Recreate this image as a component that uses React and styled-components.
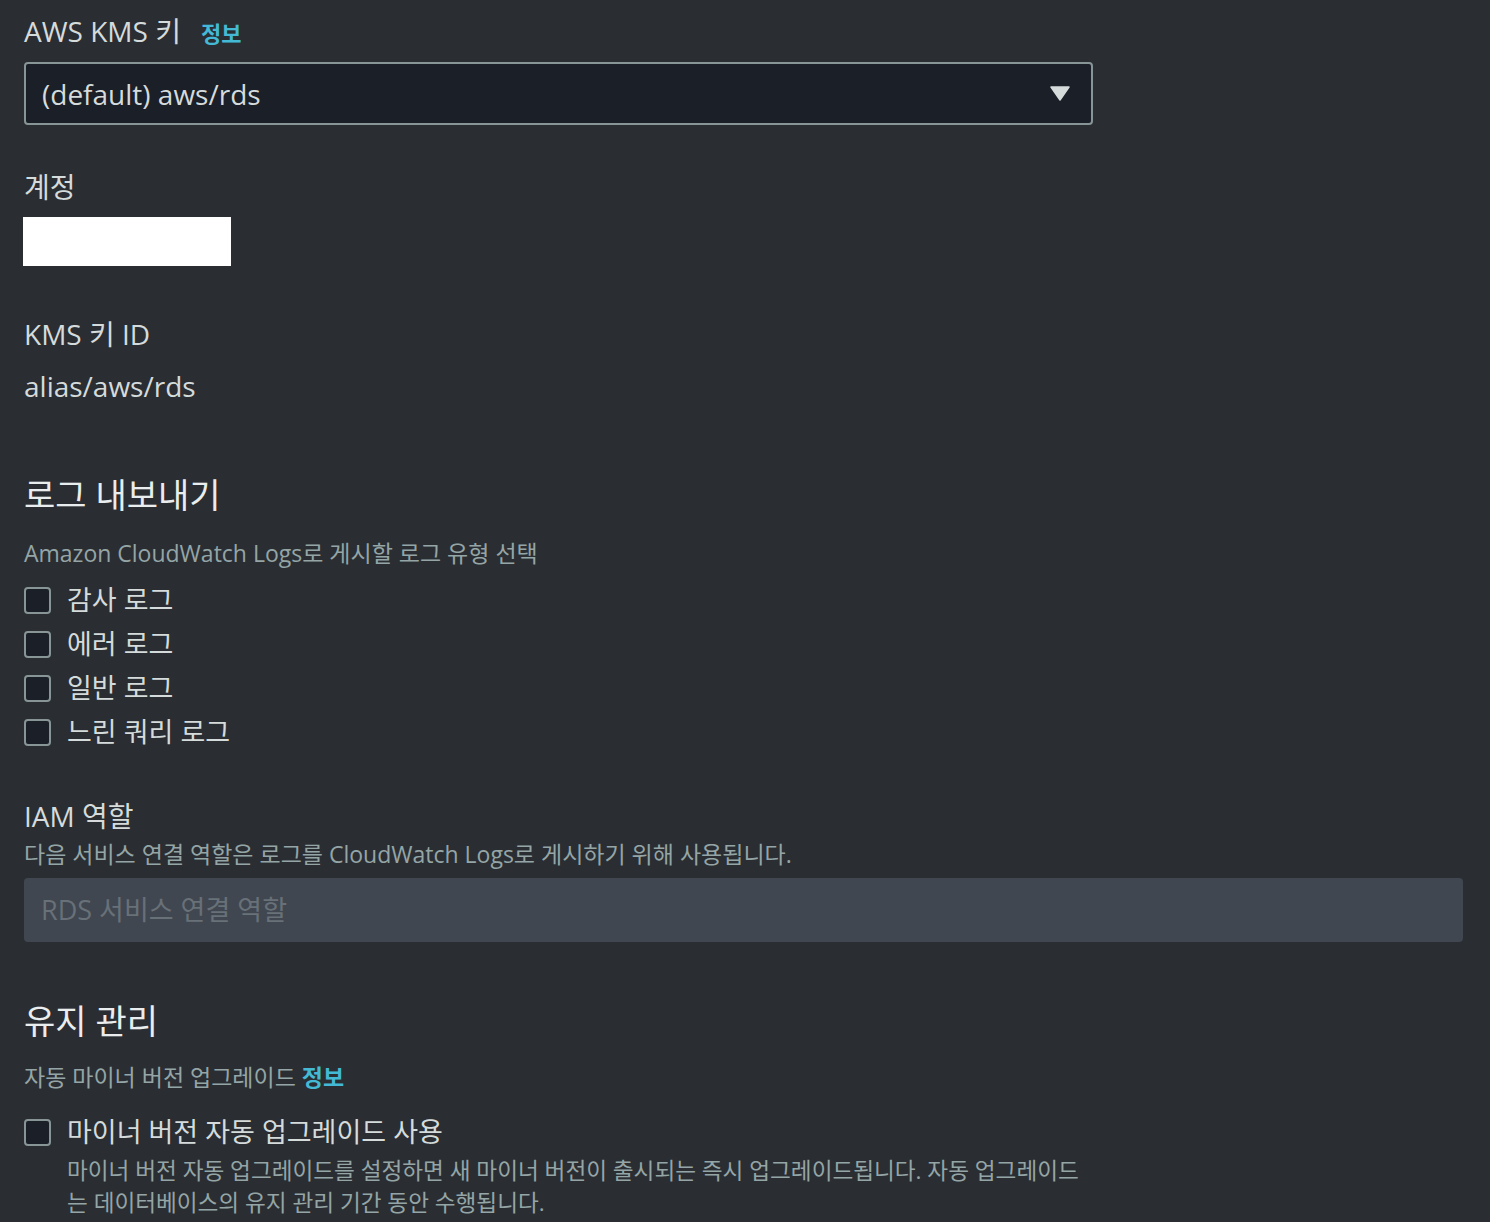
import React from "react";
import styled, { createGlobalStyle } from "styled-components";

const GlobalStyle = createGlobalStyle`
  html, body {
    margin: 0;
    padding: 0;
    background: #2a2e33;
  }
  body {
    font-family: "Open Sans", "Noto Sans CJK KR", sans-serif;
    color: #d5dbdb;
    -webkit-font-smoothing: antialiased;
  }
`;

const Page = styled.div`
  min-height: 1222px;
  box-sizing: border-box;
  padding: 13px 27px 0 24px;
  display: flex;
  flex-direction: column;
  background: #2a2e33;
`;

const Field = styled.div`
  display: flex;
  flex-direction: column;
  align-items: flex-start;
  gap: ${p => p.$gap ?? 0}px;
  margin-top: ${p => p.$top ?? 0}px;
`;

const Label = styled.div`
  font-size: 28px;
  line-height: 36px;
  font-weight: 400;
  color: #d5dbdb;
`;

const InfoLink = styled.a`
  margin-left: ${p => p.$gap ?? 0}px;
  font-size: ${p => p.$size ?? 22}px;
  line-height: 24px;
  font-weight: 700;
  color: #44b9d6;
  text-decoration: none;
  cursor: pointer;
`;

const Select = styled.div`
  box-sizing: border-box;
  width: 1069px;
  height: 63px;
  padding: 0 21px 0 16px;
  display: flex;
  align-items: center;
  justify-content: space-between;
  border: 2px solid #879596;
  border-radius: 4px;
  background: #1b1f27;
  font-size: 28px;
  line-height: 36px;
  color: #d5dbdb;
`;

const Value = styled.div`
  font-size: 28px;
  line-height: 36px;
  color: #d5dbdb;
`;

const Redacted = styled.div`
  width: 208px;
  height: 49px;
  margin-left: -1px;
  background: #ffffff;
`;

const Heading = styled.h2`
  margin: ${p => p.$top ?? 0}px 0 0;
  font-size: 34px;
  line-height: 40px;
  font-weight: 400;
  color: #eaeded;
`;

const Description = styled.div`
  margin-top: ${p => p.$top ?? 0}px;
  font-size: 23px;
  line-height: 30px;
  color: #95a5a6;
`;

const CheckList = styled.div`
  display: flex;
  flex-direction: column;
  gap: 8px;
  margin-top: ${p => p.$top ?? 0}px;
`;

const CheckRow = styled.label`
  display: grid;
  grid-template-columns: 27px 1fr;
  column-gap: 16px;
  align-items: start;
  max-width: 1064px;
  margin-top: ${p => p.$top ?? 0}px;
  cursor: pointer;
`;

const Box = styled.span`
  box-sizing: border-box;
  width: 27px;
  height: 27px;
  margin-top: 4.5px;
  border: 2px solid #879596;
  border-radius: 4px;
  background: #1b1f27;
`;

const CheckText = styled.div`
  display: flex;
  flex-direction: column;
`;

const CheckLabel = styled.span`
  font-size: 27px;
  line-height: 36px;
  color: #d5dbdb;
`;

const Hint = styled(Description)`
  font-size: 22.6px;
  line-height: 32px;
`;

const Input = styled.div`
  box-sizing: border-box;
  width: 100%;
  height: 64px;
  margin-top: ${p => p.$top ?? 0}px;
  padding: 0 17px;
  display: flex;
  align-items: center;
  border-radius: 4px;
  background: #414750;
  font-size: 27px;
  line-height: 36px;
  color: #687078;
`;

const Caret = () => (
  <svg width="20" height="15" viewBox="0 0 20 15">
    <path
      d="M1 1 H19 L10 14 Z"
      fill="#d5dbdb"
      stroke="#d5dbdb"
      strokeWidth="1.5"
      strokeLinejoin="round"
    />
  </svg>
);

const Checkbox = ({ label, hint, top }) => (
  <CheckRow $top={top}>
    <Box />
    <CheckText>
      <CheckLabel>{label}</CheckLabel>
      {hint && <Hint $top={5}>{hint}</Hint>}
    </CheckText>
  </CheckRow>
);

const logTypes = ["감사 로그", "에러 로그", "일반 로그", "느린 쿼리 로그"];

export default function App() {
  return (
    <>
      <GlobalStyle />
      <Page>
        <Field $gap={13}>
          <Label>
            AWS KMS 키
            <InfoLink $gap={20}>정보</InfoLink>
          </Label>
          <Select>
            <span>(default) aws/rds</span>
            <Caret />
          </Select>
        </Field>

        <Field $gap={12} $top={44}>
          <Label>계정</Label>
          <Redacted />
        </Field>

        <Field $gap={16} $top={50}>
          <Label>KMS 키 ID</Label>
          <Value>alias/aws/rds</Value>
        </Field>

        <Heading $top={71}>로그 내보내기</Heading>
        <Description $top={23}>
          Amazon CloudWatch Logs로 게시할 로그 유형 선택
        </Description>
        <CheckList $top={14}>
          {logTypes.map(t => (
            <Checkbox key={t} label={t} />
          ))}
        </CheckList>

        <Field $top={48}>
          <Label>IAM 역할</Label>
          <Description $top={5}>
            다음 서비스 연결 역할은 로그를 CloudWatch Logs로 게시하기 위해
            사용됩니다.
          </Description>
        </Field>
        <Input $top={9}>RDS 서비스 연결 역할</Input>

        <Heading $top={59}>유지 관리</Heading>
        <Description $top={21}>
          자동 마이너 버전 업그레이드 <InfoLink $size={23}>정보</InfoLink>
        </Description>
        <Checkbox
          top={22}
          label="마이너 버전 자동 업그레이드 사용"
          hint="마이너 버전 자동 업그레이드를 설정하면 새 마이너 버전이 출시되는 즉시 업그레이드됩니다. 자동 업그레이드는 데이터베이스의 유지 관리 기간 동안 수행됩니다."
        />
      </Page>
    </>
  );
}
